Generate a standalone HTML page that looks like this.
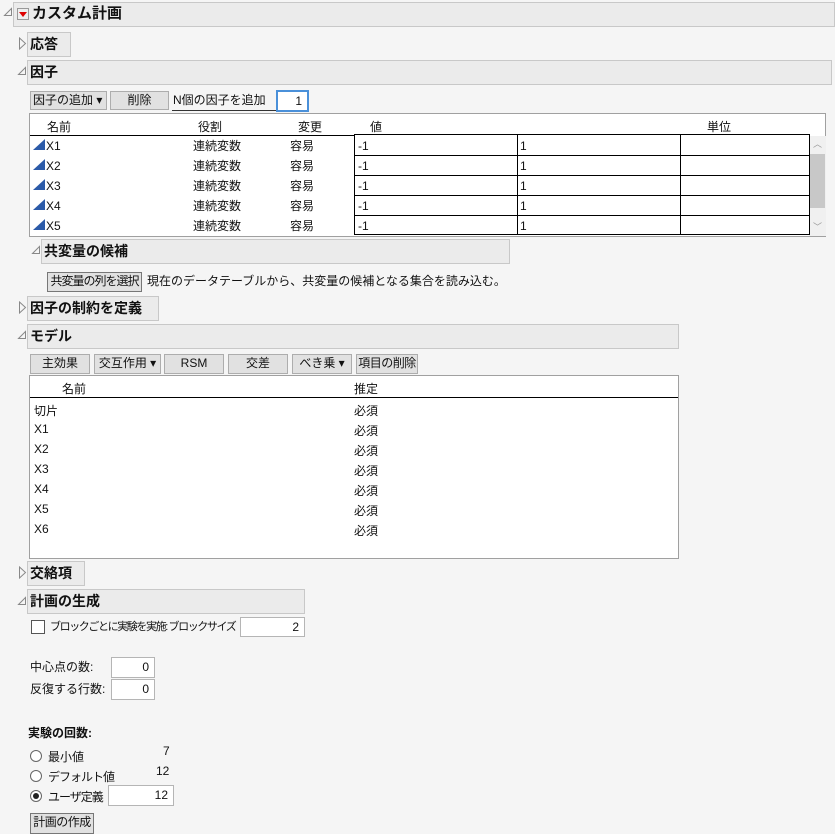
<!DOCTYPE html>
<html><head><meta charset="utf-8">
<style>
*{box-sizing:border-box;margin:0;padding:0}
body{width:835px;height:834px;background:#f5f5f5;position:relative;overflow:hidden;font-family:"Liberation Sans","Noto Sans CJK JP",sans-serif;font-size:12px;color:#111}
.a{position:absolute;white-space:nowrap}
.bar{position:absolute;background:#ebebeb;border:1px solid #c8c8c8}
.h{position:absolute;font-weight:bold;font-size:14px;line-height:24px;white-space:nowrap}
.btn{position:absolute;background:#e1e1e1;border:1px solid #adadad;text-align:center;line-height:17px;font-size:12px;white-space:nowrap;overflow:hidden}
.inp{position:absolute;background:#fff;border:1px solid #b5b5b5;text-align:right;padding-right:5px;line-height:18px}
.tri{position:absolute}
.row{position:absolute;left:0;height:20px;line-height:20px}
.rad{position:absolute;width:12px;height:12px;border:1px solid #666;border-radius:50%;background:#fff}
.ico{position:absolute;width:0;height:0;border-left:12px solid transparent;border-bottom:11px solid #2b5aa8}
</style></head><body>

<svg class="tri" style="left:3px;top:7px" width="10" height="10"><path d="M1.5 8.5 L8.5 1.5 L8.5 8.5 Z" fill="none" stroke="#888" stroke-width="1"/></svg>
<div class="bar" style="left:13px;top:2px;width:822px;height:25px"></div>
<div class="a" style="left:17px;top:8px;width:12px;height:12px;border:1px solid #999;background:#eee"></div>
<div class="a" style="left:19px;top:12px;width:0;height:0;border-left:4px solid transparent;border-right:4px solid transparent;border-top:5px solid #d00"></div>
<div class="h" style="left:32px;top:2px;font-size:15px">カスタム計画</div>

<svg class="tri" style="left:18px;top:37px" width="9" height="13"><path d="M1.5 1 L7.5 6.5 L1.5 12 Z" fill="none" stroke="#888"/></svg>
<div class="bar" style="left:27px;top:32px;width:44px;height:25px"></div>
<div class="h" style="left:30px;top:32px">応答</div>

<svg class="tri" style="left:17px;top:66px" width="10" height="10"><path d="M1.5 8.5 L8.5 1.5 L8.5 8.5 Z" fill="none" stroke="#888"/></svg>
<div class="bar" style="left:27px;top:60px;width:805px;height:25px"></div>
<div class="h" style="left:30px;top:60px">因子</div>

<div class="btn" style="left:30px;top:91px;width:77px;height:19px;text-align:left;padding-left:2px">因子の追加 ▾</div>
<div class="btn" style="left:110px;top:91px;width:59px;height:19px">削除</div>
<div class="a" style="left:173px;top:92px;line-height:17px">N個の因子を追加</div>
<div class="a" style="left:172px;top:110px;width:104px;height:1px;background:#333"></div>
<div class="inp" style="left:276px;top:90px;width:33px;height:22px;border:2px solid #4a90d9;line-height:18px">1</div>

<div class="a" style="left:29px;top:113px;width:797px;height:124px;background:#fff;border:1px solid #a0a0a0">
  <div class="a" style="left:17px;top:4px">名前</div>
  <div class="a" style="left:168px;top:4px">役割</div>
  <div class="a" style="left:268px;top:4px">変更</div>
  <div class="a" style="left:340px;top:4px">値</div>
  <div class="a" style="left:677px;top:4px">単位</div>
  <div class="a" style="left:0;top:21px;width:780px;height:1px;background:#000"></div>
  <div class="a" style="left:779px;top:22px;width:17px;height:100px;background:#f0f0f0"></div>
  <div class="a" style="left:780px;top:40px;width:15px;height:54px;background:#c8c8c8"></div>
  <div class="a" style="left:783px;top:23px;font-size:9px;color:#999">︿</div>
  <div class="a" style="left:783px;top:106px;font-size:9px;color:#999">﹀</div>
</div>
<div class="a" style="left:29px;top:135px;width:780px">
  <div class="row" style="top:0"><div class="ico" style="left:4px;top:4px"></div><span class="a" style="left:17px;top:1px">X1</span><span class="a" style="left:164px;top:1px">連続変数</span><span class="a" style="left:261px;top:1px">容易</span></div>
  <div class="row" style="top:20px"><div class="ico" style="left:4px;top:4px"></div><span class="a" style="left:17px;top:1px">X2</span><span class="a" style="left:164px;top:1px">連続変数</span><span class="a" style="left:261px;top:1px">容易</span></div>
  <div class="row" style="top:40px"><div class="ico" style="left:4px;top:4px"></div><span class="a" style="left:17px;top:1px">X3</span><span class="a" style="left:164px;top:1px">連続変数</span><span class="a" style="left:261px;top:1px">容易</span></div>
  <div class="row" style="top:60px"><div class="ico" style="left:4px;top:4px"></div><span class="a" style="left:17px;top:1px">X4</span><span class="a" style="left:164px;top:1px">連続変数</span><span class="a" style="left:261px;top:1px">容易</span></div>
  <div class="row" style="top:80px"><div class="ico" style="left:4px;top:4px"></div><span class="a" style="left:17px;top:1px">X5</span><span class="a" style="left:164px;top:1px">連続変数</span><span class="a" style="left:261px;top:1px">容易</span></div>
</div>
<div class="a" style="left:354px;top:134px;width:456px;height:101px;border:1px solid #000;background:#fff">
  <div class="a" style="left:162px;top:0;width:1px;height:100px;background:#000"></div>
  <div class="a" style="left:325px;top:0;width:1px;height:100px;background:#000"></div>
  <div class="a" style="left:0;top:20px;width:455px;height:1px;background:#000"></div>
  <div class="a" style="left:0;top:40px;width:455px;height:1px;background:#000"></div>
  <div class="a" style="left:0;top:60px;width:455px;height:1px;background:#000"></div>
  <div class="a" style="left:0;top:80px;width:455px;height:1px;background:#000"></div>
  <div class="a" style="left:3px;top:4px">-1</div><div class="a" style="left:165px;top:4px">1</div>
  <div class="a" style="left:3px;top:24px">-1</div><div class="a" style="left:165px;top:24px">1</div>
  <div class="a" style="left:3px;top:44px">-1</div><div class="a" style="left:165px;top:44px">1</div>
  <div class="a" style="left:3px;top:64px">-1</div><div class="a" style="left:165px;top:64px">1</div>
  <div class="a" style="left:3px;top:84px">-1</div><div class="a" style="left:165px;top:84px">1</div>
</div>

<svg class="tri" style="left:31px;top:245px" width="10" height="10"><path d="M1.5 8.5 L8.5 1.5 L8.5 8.5 Z" fill="none" stroke="#888"/></svg>
<div class="bar" style="left:41px;top:239px;width:469px;height:25px"></div>
<div class="h" style="left:44px;top:239px">共変量の候補</div>
<div class="btn" style="left:47px;top:272px;width:95px;height:20px;letter-spacing:-1px;border-color:#777">共変量の列を選択</div>
<div class="a" style="left:147px;top:273px;line-height:17px">現在のデータテーブルから、共変量の候補となる集合を読み込む。</div>

<svg class="tri" style="left:18px;top:301px" width="9" height="13"><path d="M1.5 1 L7.5 6.5 L1.5 12 Z" fill="none" stroke="#888"/></svg>
<div class="bar" style="left:27px;top:296px;width:132px;height:25px"></div>
<div class="h" style="left:30px;top:296px">因子の制約を定義</div>

<svg class="tri" style="left:17px;top:330px" width="10" height="10"><path d="M1.5 8.5 L8.5 1.5 L8.5 8.5 Z" fill="none" stroke="#888"/></svg>
<div class="bar" style="left:27px;top:324px;width:652px;height:25px"></div>
<div class="h" style="left:30px;top:324px">モデル</div>

<div class="btn" style="left:30px;top:354px;width:60px;height:20px">主効果</div>
<div class="btn" style="left:94px;top:354px;width:67px;height:20px">交互作用 ▾</div>
<div class="btn" style="left:164px;top:354px;width:60px;height:20px">RSM</div>
<div class="btn" style="left:228px;top:354px;width:60px;height:20px">交差</div>
<div class="btn" style="left:292px;top:354px;width:60px;height:20px">べき乗 ▾</div>
<div class="btn" style="left:356px;top:354px;width:62px;height:20px;letter-spacing:-0.5px">項目の削除</div>

<div class="a" style="left:29px;top:375px;width:650px;height:184px;background:#fff;border:1px solid #a0a0a0">
  <div class="a" style="left:32px;top:4px">名前</div>
  <div class="a" style="left:324px;top:4px">推定</div>
  <div class="a" style="left:0;top:21px;width:648px;height:1px;background:#000"></div>
  <div class="a" style="left:4px;top:26px">切片</div><div class="a" style="left:324px;top:26px">必須</div>
  <div class="a" style="left:4px;top:46px">X1</div><div class="a" style="left:324px;top:46px">必須</div>
  <div class="a" style="left:4px;top:66px">X2</div><div class="a" style="left:324px;top:66px">必須</div>
  <div class="a" style="left:4px;top:86px">X3</div><div class="a" style="left:324px;top:86px">必須</div>
  <div class="a" style="left:4px;top:106px">X4</div><div class="a" style="left:324px;top:106px">必須</div>
  <div class="a" style="left:4px;top:126px">X5</div><div class="a" style="left:324px;top:126px">必須</div>
  <div class="a" style="left:4px;top:146px">X6</div><div class="a" style="left:324px;top:146px">必須</div>
</div>

<svg class="tri" style="left:18px;top:566px" width="9" height="13"><path d="M1.5 1 L7.5 6.5 L1.5 12 Z" fill="none" stroke="#888"/></svg>
<div class="bar" style="left:27px;top:561px;width:58px;height:25px"></div>
<div class="h" style="left:30px;top:561px">交絡項</div>

<svg class="tri" style="left:17px;top:596px" width="10" height="10"><path d="M1.5 8.5 L8.5 1.5 L8.5 8.5 Z" fill="none" stroke="#888"/></svg>
<div class="bar" style="left:27px;top:589px;width:278px;height:25px"></div>
<div class="h" style="left:30px;top:589px">計画の生成</div>

<div class="a" style="left:31px;top:620px;width:14px;height:14px;border:1px solid #555;background:#fff"></div>
<div class="a" style="left:50px;top:619px;line-height:16px;font-size:11px;letter-spacing:-1.4px">ブロックごとに実験を実施: ブロックサイズ</div>
<div class="inp" style="left:240px;top:617px;width:65px;height:20px">2</div>

<div class="a" style="left:30px;top:658px">中心点の数:</div>
<div class="inp" style="left:111px;top:657px;width:44px;height:21px">0</div>
<div class="a" style="left:30px;top:680px">反復する行数:</div>
<div class="inp" style="left:111px;top:679px;width:44px;height:21px">0</div>

<div class="a" style="left:28px;top:724px;font-weight:bold">実験の回数:</div>
<div class="rad" style="left:30px;top:750px"></div><div class="a" style="left:48px;top:748px">最小値</div><div class="a" style="left:163px;top:744px">7</div>
<div class="rad" style="left:30px;top:770px"></div><div class="a" style="left:48px;top:768px;letter-spacing:-1px">デフォルト値</div><div class="a" style="left:156px;top:764px">12</div>
<div class="rad" style="left:30px;top:790px"></div><div class="a" style="left:33px;top:793px;width:6px;height:6px;border-radius:50%;background:#222"></div><div class="a" style="left:48px;top:788px;letter-spacing:-1px">ユーザ定義</div>
<div class="inp" style="left:108px;top:785px;width:66px;height:21px">12</div>

<div class="btn" style="left:30px;top:813px;width:64px;height:21px;border-color:#777;letter-spacing:-0.5px">計画の作成</div>
</body></html>
